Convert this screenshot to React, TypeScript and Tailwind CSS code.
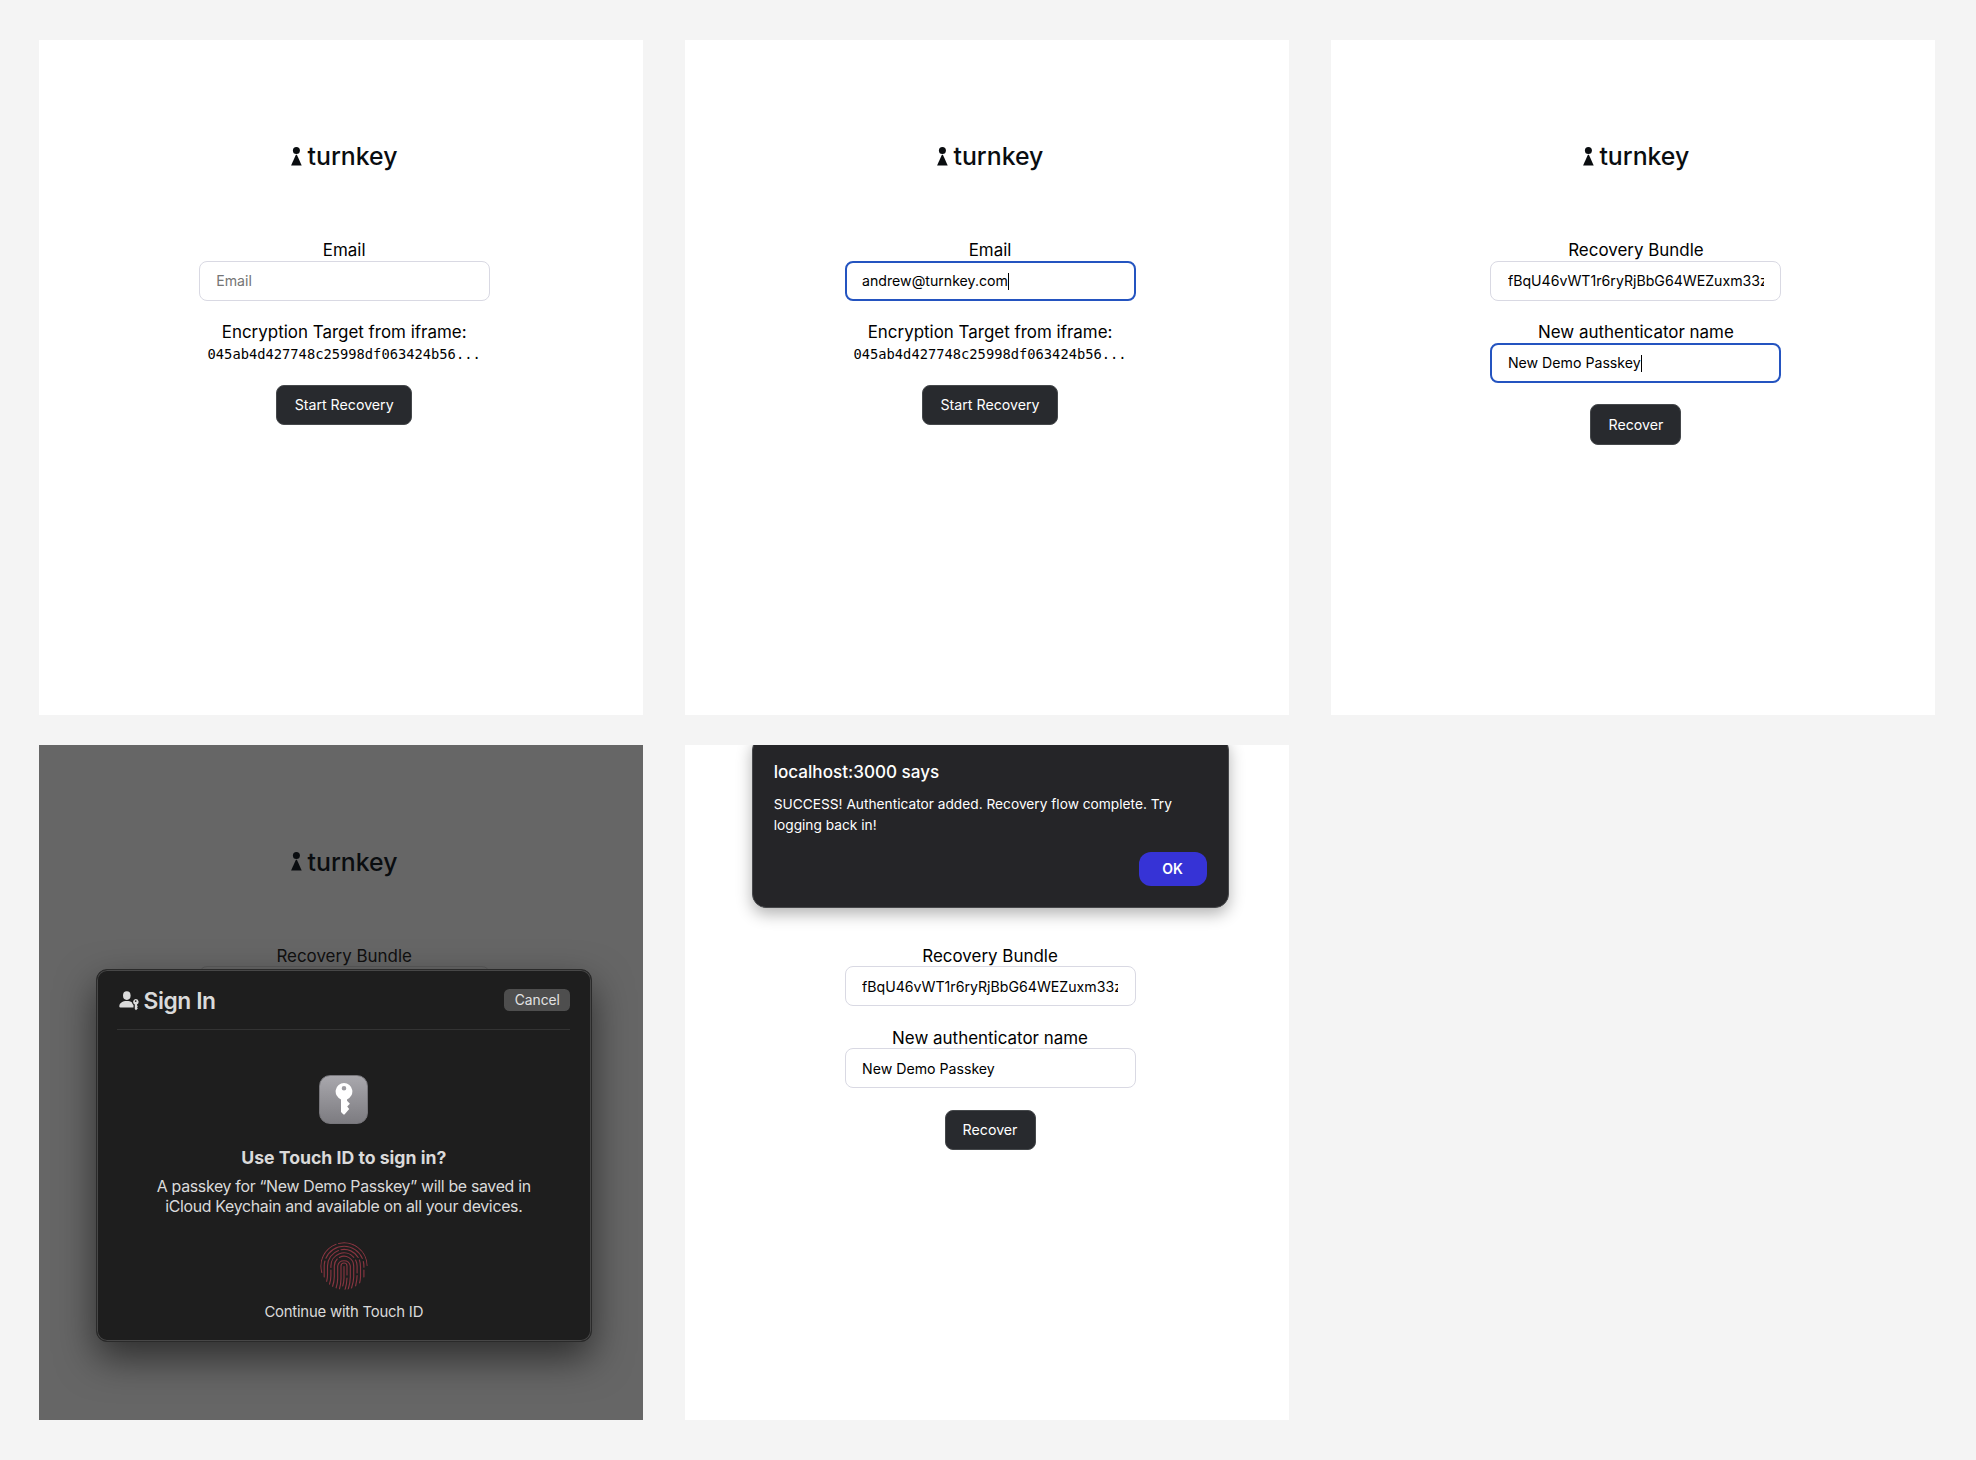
import type { ReactNode } from 'react';

function Logo() {
  return (
    <div className="flex h-[36px] items-start">
      <svg width="12" height="19" viewBox="0 0 12 19" className="mt-[8px]" fill="currentColor">
        <circle cx="5.4" cy="3.6" r="3.5" />
        <path d="M4.9 7.7h1L10.7 18.5H.1z" />
      </svg>
      <span className="-mt-[0.7px] ml-[4.8px] whitespace-nowrap text-[24.8px] leading-[36px] font-medium">turnkey</span>
    </div>
  );
}

function Label({ children }: { children: ReactNode }) {
  return <div className="h-[20.6px] whitespace-nowrap text-[16.95px] leading-[20px]">{children}</div>;
}

function Field({ value, placeholder, focused }: { value?: string; placeholder?: string; focused?: boolean }) {
  return (
    <div
      className={
        focused
          ? 'flex h-[40px] w-[291px] items-center rounded-[8px] border-2 border-[#2454c0] bg-white px-[15.5px]'
          : 'flex h-[40px] w-[291px] items-center rounded-[8px] border border-[#d9d9e3] bg-white px-[16.5px]'
      }
    >
      <div className="flex flex-1 items-center overflow-hidden pt-[1px] text-[14.15px] leading-[20px] whitespace-nowrap">
        {value ? <span>{value}</span> : <span className="text-[#757575]">{placeholder}</span>}
        {focused && <span className="h-[17px] w-px shrink-0 bg-black" />}
      </div>
    </div>
  );
}

function ActionButton({ children, className }: { children: ReactNode; className: string }) {
  return (
    <button
      className={`${className} h-[40.5px] rounded-[8px] border border-[#45484b] bg-[#282a2e] text-center text-[14.2px] leading-[38px] whitespace-nowrap text-white`}
    >
      {children}
    </button>
  );
}

function Panel({ children, dimmed, overlay }: { children: ReactNode; dimmed?: boolean; overlay?: ReactNode }) {
  return (
    <section className={dimmed ? 'relative h-[675px] overflow-hidden bg-[#666666]' : 'relative h-[675px] overflow-hidden bg-white'}>
      <div className="flex flex-col items-center pt-[99px] pl-[6px] text-black">
        <div className="mb-[65.3px] text-[#0a0d10]">
          <Logo />
        </div>
        {children}
      </div>
      {overlay}
    </section>
  );
}

function EmailForm({ email }: { email?: string }) {
  return (
    <>
      <Label>Email</Label>
      <Field value={email} placeholder="Email" focused={Boolean(email)} />
      <div className="h-[21.5px]" />
      <Label>Encryption Target from iframe:</Label>
      <div className="font-['DejaVu_Sans_Mono',monospace] text-[13.75px] leading-[23px] whitespace-nowrap">
        045ab4d427748c25998df063424b56...
      </div>
      <div className="h-[18.9px]" />
      <ActionButton className="w-[136px]">Start Recovery</ActionButton>
    </>
  );
}

function RecoverForm({ focused }: { focused?: boolean }) {
  return (
    <>
      <Label>Recovery Bundle</Label>
      <Field value="fBqU46vWT1r6ryRjBbG64WEZuxm33zKQ" />
      <div className="h-[21.6px]" />
      <Label>New authenticator name</Label>
      <Field value="New Demo Passkey" focused={focused} />
      <div className="h-[21.5px]" />
      <ActionButton className="w-[91px]">Recover</ActionButton>
    </>
  );
}

function PersonKeyIcon() {
  return (
    <svg width="20" height="20" viewBox="0 0 20 20" fill="#dcdcdc" className="mt-px">
      <ellipse cx="7.8" cy="4.6" rx="3.8" ry="4.3" />
      <path d="M.3 15.6C.3 12 3.6 10.1 7.8 10.1c2.1 0 3.9.5 5.2 1.3.2 1.1.8 2 1.5 2.6v2.5H1.4c-.7 0-1.1-.3-1.1-.9z" />
      <path
        fillRule="evenodd"
        d="M16.7 7.9a2.9 2.9 0 0 1 1.3 5.5v.9l.9.9-.9 1 .9 1-1.9 2-1.2-1.2v-4.6a2.9 2.9 0 0 1 .9-5.5zm0 1.3a.85.85 0 1 0 0 1.7.85.85 0 0 0 0-1.7z"
      />
    </svg>
  );
}

function KeyTile() {
  return (
    <div className="flex h-[49px] w-[49px] items-center justify-center rounded-[11px] border border-[#77767b] bg-linear-to-b from-[#a9a8ad] to-[#7d7c81]">
      <svg width="18" height="34" viewBox="0 0 18 34">
        <path
          fill="#ffffff"
          fillRule="evenodd"
          d="M9 1a8.5 8.5 0 0 1 3 16.4v1.4l2.9 2.9-2.7 2.7 2 2.6-4.7 5.5h-1L6 30V17.4A8.5 8.5 0 0 1 9 1zm0 2.9a2.3 2.3 0 1 0 0 4.6 2.3 2.3 0 0 0 0-4.6z"
        />
      </svg>
    </div>
  );
}

function Fingerprint() {
  return (
    <svg width="48" height="48" viewBox="0 0 48 48" fill="none" stroke="#873540" strokeWidth="1.15" strokeLinecap="round">
      <clipPath id="disc">
        <circle cx="24" cy="24" r="23.8" />
      </clipPath>
      <g clipPath="url(#disc)">
        <path d="M1.8 30.5A23.2 23.2 0 0 1 16 2.2" />
        <path d="M18.6 1.4A23.2 23.2 0 0 1 47.2 23.5" />
        <path d="M4.2 35V24A19.8 19.8 0 0 1 4.9 19" />
        <path d="M5.9 16.2A19.8 19.8 0 0 1 42.3 16.4" />
        <path d="M43.3 19.5Q44 22 43.9 25.2M43.9 28V35" />
        <path d="M6.6 39.5Q7.6 36 7.5 32V24A16.5 16.5 0 0 1 18.5 8.5" />
        <path d="M21 7.7A16.5 16.5 0 0 1 38.2 15.5" />
        <path d="M39.4 18Q40.6 21 40.5 26V35Q40.4 38 39.6 41" />
        <path d="M9.4 42.5Q11 38 10.9 33V28M10.9 25.5V24A13.1 13.1 0 0 1 33.8 15.3" />
        <path d="M35.6 18Q37.1 21 37.1 24V31M37.1 33.5Q37.1 38 35.6 44" />
        <path d="M12.4 45Q14.4 39 14.3 34V24A9.7 9.7 0 0 1 17.2 17" />
        <path d="M19.4 15.4A9.7 9.7 0 0 1 33.7 24V35Q33.6 40 31.4 46.5" />
        <path d="M16 46.5Q17.8 41 17.7 36V24A6.4 6.4 0 0 1 30.3 24V35Q30.3 41 28 48" />
        <path d="M19.2 48Q21.1 42 21 36V24A3 3 0 0 1 27 24V33" />
        <path d="M24 24.5V36Q24 40 22.7 44M27 36Q26.8 42 25 48" />
      </g>
    </svg>
  );
}

function SignInSheet() {
  return (
    <div className="absolute top-[223.8px] left-[56.4px] flex h-[373px] w-[496px] flex-col items-center rounded-[11px] border border-[#2a2a2a] bg-[#1e1e1e] text-[#dadada] shadow-[0_16px_38px_rgba(0,0,0,0.55)] ring-1 ring-[#474747] ring-inset">
      <div className="flex h-[60px] w-[453px] items-center border-b border-[#333333] pt-[1px] pl-[2px]">
        <PersonKeyIcon />
        <h2 className="mt-[2.4px] ml-[4.2px] flex-1 text-[22.8px] leading-[28px] font-semibold tracking-[-0.4px]">Sign In</h2>
        <button className="h-[22px] w-[66px] rounded-[5.5px] bg-[#4e4e4e] text-[13.8px] leading-[21px] text-[#e2e2e2]">Cancel</button>
      </div>
      <div className="h-[44.7px]" />
      <KeyTile />
      <h3 className="mt-[22px] text-[17.65px] leading-[24px] font-bold">Use Touch ID to sign in?</h3>
      <p className="mt-[7.3px] text-center text-[15.9px] leading-[20.2px] tracking-[-0.32px] whitespace-nowrap">
        A passkey for “New Demo Passkey” will be saved in
        <br />
        iCloud Keychain and available on all your devices.
      </p>
      <div className="h-[24px]" />
      <Fingerprint />
      <p className="mt-[12.5px] text-[14.9px] leading-[20px] tracking-[-0.22px]">Continue with Touch ID</p>
    </div>
  );
}

function AlertDialog() {
  return (
    <div className="absolute -top-[9.8px] left-[66.4px] flex h-[172px] w-[477px] flex-col rounded-[14px] border border-[#47484b] bg-[#252528] px-[21px] pt-[20.5px] text-white shadow-[0_6px_16px_rgba(0,0,0,0.3)]">
      <h2 className="text-[17.1px] leading-[30px] font-medium">localhost:3000 says</h2>
      <p className="mt-[6.5px] text-[13.72px] leading-[21.4px] whitespace-nowrap">
        SUCCESS! Authenticator added. Recovery flow complete. Try
        <br />
        logging back in!
      </p>
      <button className="mt-[15.5px] h-[34px] w-[68px] self-end rounded-[12px] bg-[#3633d6] text-[14px] leading-[34px] font-semibold">OK</button>
    </div>
  );
}

export default function App() {
  return (
    <main className="grid h-[1460px] w-[1976px] auto-rows-[675px] grid-cols-[603.5px_603.5px_603.5px] content-start gap-x-[42.4px] gap-y-[30.7px] overflow-hidden bg-[#f4f4f4] pt-[39.7px] pl-[39.4px] font-['Inter',sans-serif]">
      <Panel>
        <EmailForm />
      </Panel>
      <Panel>
        <EmailForm email="andrew@turnkey.com" />
      </Panel>
      <Panel>
        <RecoverForm focused />
      </Panel>
      <Panel dimmed overlay={<SignInSheet />}>
        <div className="flex flex-col items-center text-[#101010]">
          <Label>Recovery Bundle</Label>
          <div className="h-[40px] w-[291px] rounded-[8px] border border-[#5a5a5a]" />
        </div>
      </Panel>
      <Panel overlay={<AlertDialog />}>
        <RecoverForm />
      </Panel>
    </main>
  );
}
